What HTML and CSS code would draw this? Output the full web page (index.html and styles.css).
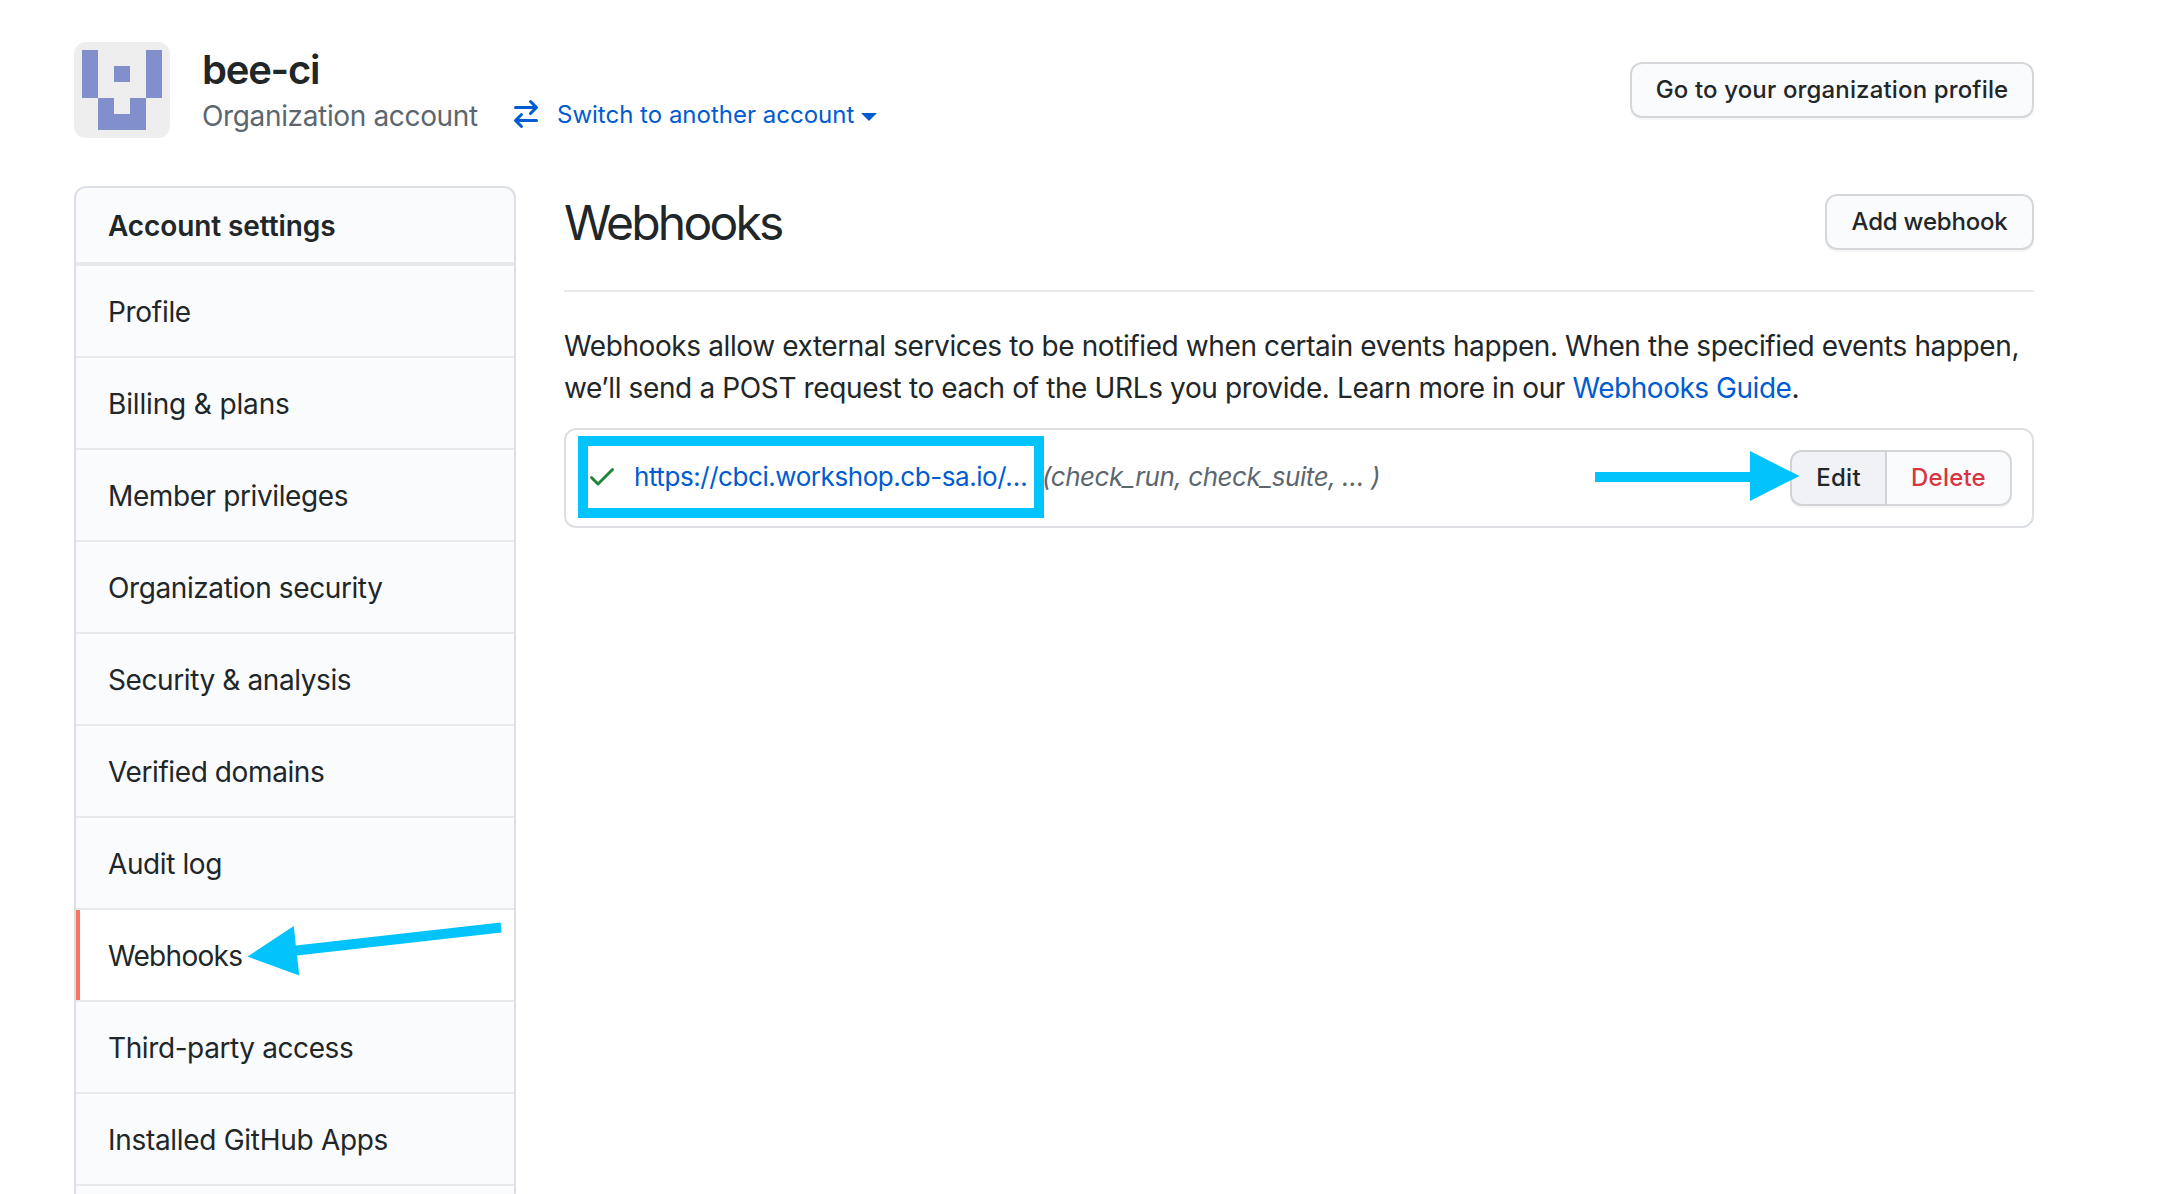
FILE: index.html
```html
<!DOCTYPE html>
<html lang="en">
<head>
<meta charset="utf-8">
<title>Webhooks</title>
<link rel="stylesheet" href="styles.css">
</head>
<body>
<header class="account">
  <svg class="avatar" viewBox="0 0 96 96" aria-hidden="true">
    <rect width="96" height="96" rx="12" fill="#eeeeee"/>
    <path fill="#828fcd" d="M8 8h16v48h16v16h16V56h16V8h16v48H72v32H24V56H8zM40 24h16v16H40z"/>
  </svg>
  <div class="account-text">
    <h1 class="account-name">bee-ci</h1>
    <div class="account-meta">
      <span class="account-kind">Organization account</span>
      <a class="switch">
        <svg class="icon" viewBox="0 0 16 16" aria-hidden="true"><path d="M5.22 14.78a.75.75 0 001.06-1.06L4.56 12h8.69a.75.75 0 000-1.5H4.56l1.72-1.72a.75.75 0 00-1.06-1.06l-3 3a.75.75 0 000 1.06l3 3zm5.56-6.5a.75.75 0 11-1.06-1.06l1.72-1.72H2.75a.75.75 0 010-1.5h8.69L9.72 2.28a.75.75 0 011.06-1.06l3 3a.75.75 0 010 1.06l-3 3z"/></svg>
        <span class="switch-label">Switch to another account</span>
        <span class="caret"></span>
      </a>
    </div>
  </div>
  <a class="btn btn-profile">Go to your organization profile</a>
</header>
<div class="layout">
  <nav class="menu">
    <h2 class="menu-heading">Account settings</h2>
    <a class="menu-item wide">Profile</a>
    <a class="menu-item wider">Billing &amp; plans</a>
    <a class="menu-item">Member privileges</a>
    <a class="menu-item">Organization security</a>
    <a class="menu-item">Security &amp; analysis</a>
    <a class="menu-item">Verified domains</a>
    <a class="menu-item">Audit log</a>
    <a class="menu-item selected">Webhooks</a>
    <a class="menu-item">Third-party access</a>
    <a class="menu-item wide">Installed GitHub Apps</a>
  </nav>
  <main class="content">
    <div class="subhead">
      <h2 class="subhead-title">Webhooks</h2>
      <a class="btn btn-add">Add webhook</a>
    </div>
    <p class="intro">Webhooks allow external services to be notified when certain events happen. When the specified events happen,<br><span class="intro-more">we’ll send a POST request to each of the URLs you provide. Learn more in our </span><a class="link">Webhooks Guide</a>.</p>
    <div class="hook">
      <svg class="icon check" viewBox="0 0 16 16" aria-hidden="true"><path d="M13.78 4.22a.75.75 0 010 1.06l-7.25 7.25a.75.75 0 01-1.06 0L2.22 9.28a.75.75 0 011.06-1.06L6 10.94l6.72-6.72a.75.75 0 011.06 0z"/></svg>
      <a class="hook-url">https://cbci.workshop.cb-sa.io/…</a>
      <em class="hook-events">(check_run, check_suite, … )</em>
      <div class="btn-group">
        <a class="btn btn-edit">Edit</a>
        <a class="btn btn-delete">Delete</a>
      </div>
    </div>
  </main>
</div>
<svg class="annotations" viewBox="0 0 2158 1194" aria-hidden="true">
  <rect x="583" y="441" width="456" height="72" fill="none" stroke="#02c3fb" stroke-width="10"/>
  <path d="M1595 472H1750V451L1799.5 476L1750 501V482H1595z"/>
  <path d="M247.5 956.6L293.8 926L295.8 945.4L500.6 922.6L501.6 932.5L297 955.4L299.3 975.5z"/>
</svg>
</body>
</html>
```
FILE: styles.css
```css
* { box-sizing: border-box; }

body {
  margin: 0;
  height: 1194px;
  padding: 42px 124px 0 74px;
  overflow: hidden;
  display: flex;
  flex-direction: column;
  position: relative;
  background: #fff;
  color: #212629;
  font: 400 28px/42px Inter, "Liberation Sans", sans-serif;
  letter-spacing: -0.4px;
  white-space: nowrap;
}

h1, h2, p { margin: 0; }

.account { display: flex; align-items: flex-start; height: 144px; flex: none; }
.avatar { width: 96px; height: 96px; margin-right: 32px; flex: none; }
.account-text { flex: 1; padding-top: 2px; }
.account-name { font-size: 40px; line-height: 51px; font-weight: 600; letter-spacing: -1.24px; }
.account-meta { display: flex; color: #5c666f; letter-spacing: -0.35px; }
.account-kind { width: 308px; }
.switch { display: flex; align-items: center; height: 38px; color: #005cd0; }
.switch-label { margin-left: 15px; padding-top: 2px; font-size: 24px; letter-spacing: 0; }
.icon { width: 32px; height: 32px; fill: currentColor; flex: none; }
.caret {
  margin: 5px 0 0 7px;
  border: 8px solid transparent;
  border-top-color: currentColor;
  border-bottom-width: 0;
}

.btn {
  display: flex;
  align-items: center;
  justify-content: center;
  height: 56px;
  border: 2px solid #d5d7da;
  border-radius: 12px;
  background: #fafbfd;
  box-shadow: 0 2px 0 rgba(27, 31, 35, 0.04);
  font-size: 24px;
  font-weight: 500;
  flex: none;
}
.btn-profile { width: 404px; margin-top: 20px; letter-spacing: 0.15px; }
.btn-add { width: 209px; letter-spacing: -0.2px; }

.layout { display: flex; flex: 1; gap: 48px; min-height: 0; }

.menu {
  width: 442px;
  flex: none;
  border: 2px solid #dce0e5;
  border-bottom: 0;
  border-radius: 12px 12px 0 0;
  background: #fafbfd;
  overflow: hidden;
}
.menu-heading {
  height: 78px;
  padding: 1px 0 0 32px;
  border-bottom: 4px solid #e7e9ec;
  font-size: 28px;
  line-height: 74px;
  font-weight: 600;
  letter-spacing: -0.1px;
}
.menu-item {
  display: block;
  height: 92px;
  padding: 1px 0 0 32px;
  border-bottom: 2px solid #e7e9ec;
  line-height: 90px;
}
.wide { letter-spacing: -0.3px; }
.wider { letter-spacing: -0.15px; }
.selected { background: #fff; box-shadow: inset 4px 0 #f97664; letter-spacing: -0.7px; }

.content { flex: 1; padding-top: 8px; }
.subhead {
  display: flex;
  justify-content: space-between;
  height: 98px;
  border-bottom: 2px solid #e7e9ec;
}
.subhead-title { padding-top: 1px; font-size: 48px; line-height: 56px; font-weight: 400; letter-spacing: -2.79px; }
.intro { padding-top: 33px; }
.intro-more { letter-spacing: -0.37px; }
.link, .hook-url { color: #005cd0; }
.link { letter-spacing: -0.47px; }

.hook {
  display: flex;
  align-items: center;
  height: 100px;
  margin-top: 19px;
  padding: 0 20px;
  border: 2px solid #dce0e5;
  border-radius: 12px;
  font-size: 26px;
}
.check { margin-top: -5px; color: #22863a; }
.hook-url { width: 408px; margin: -2px 0 0 16px; letter-spacing: -0.44px; }
.hook-events { margin-top: -2px; color: #5c666f; letter-spacing: -0.45px; }

.btn-group { display: flex; margin-left: auto; }
.btn-edit {
  width: 97px;
  border-radius: 12px 0 0 12px;
  background: #f1f2f6;
  border-color: #d0d2d6;
  letter-spacing: 0.3px;
}
.btn-delete {
  width: 125px;
  border-left: 0;
  border-radius: 0 12px 12px 0;
  color: #d73541;
  letter-spacing: 0.2px;
}

.annotations {
  position: absolute;
  top: 0;
  left: 0;
  width: 2158px;
  height: 1194px;
  fill: #02c3fb;
  pointer-events: none;
}
```
